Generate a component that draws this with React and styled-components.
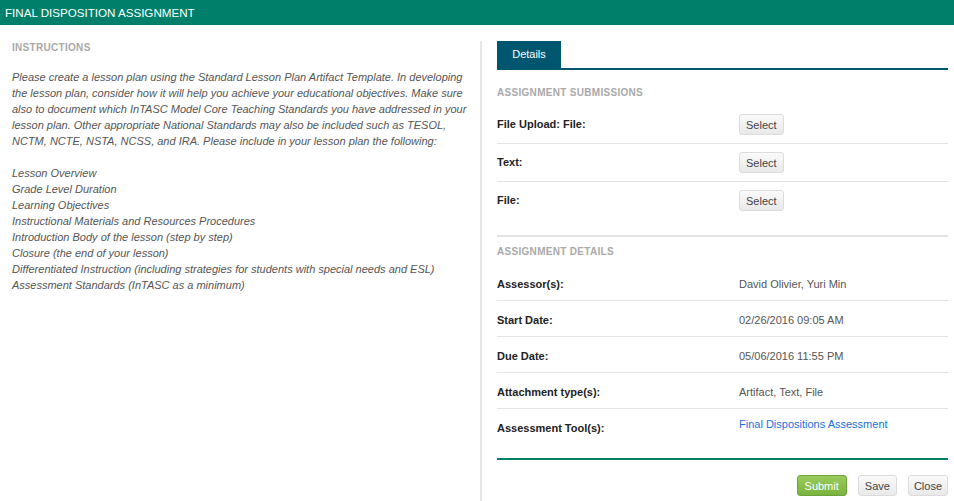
import styled, { createGlobalStyle } from "styled-components";

const GlobalStyle = createGlobalStyle`
  html, body {
    margin: 0;
    padding: 0;
    background: #fff;
    font-family: "Liberation Sans", Arial, sans-serif;
    font-size: 11px;
    color: #333;
  }
`;

const Page = styled.div`
  width: 954px;
  height: 501px;
  display: flex;
  flex-direction: column;
  overflow: hidden;
`;

const TitleBar = styled.div`
  height: 25px;
  background: #00806b;
  color: #fff;
  font-size: 11.6px;
  line-height: 25px;
  padding-left: 5px;
`;

const Main = styled.div`
  flex: 1;
  display: flex;
  padding-top: 16px;
`;

const Left = styled.div`
  width: 456px;
  padding: 0 12px;
`;

const Right = styled.div`
  flex: 1;
  border-left: 2px solid #e6e6e6;
  padding: 0 6px 0 15px;
  display: flex;
  flex-direction: column;
`;

const SectionTitle = styled.div`
  font-weight: bold;
  font-size: 10px;
  line-height: 13px;
  letter-spacing: 0.3px;
  color: #a9a9a9;
  margin: ${(p) => p.$margin || "0"};
`;

const Paragraph = styled.p`
  margin: 15px 0 0;
  font-style: italic;
  line-height: 16px;
  color: #555;
`;

const List = styled.div`
  margin-top: 16px;
  font-style: italic;
  line-height: 16px;
  color: #555;
`;

const Tabs = styled.div`
  display: flex;
  border-bottom: 2px solid #00566e;
`;

const Tab = styled.div`
  width: 64px;
  height: 27px;
  line-height: 27px;
  text-align: center;
  background: #00566e;
  color: #fff;
  font-size: 11px;
`;

const Rows = styled.div`
  margin-top: 7px;
`;

const Row = styled.div`
  display: grid;
  grid-template-columns: 242px 1fr;
  align-items: ${(p) => p.$align || "center"};
  min-height: ${(p) => p.$height || 37}px;
  border-bottom: ${(p) => (p.$last ? "none" : "1px solid #e3e3e3")};
`;

const Label = styled.div`
  font-weight: bold;
  color: #222;
  line-height: 13px;
  padding-top: ${(p) => p.$pt || 0}px;
`;

const Value = styled.div`
  color: #555;
  line-height: 13px;
  padding-top: ${(p) => p.$pt || 0}px;
`;

const Link = styled.a`
  color: #1a6fe0;
  text-decoration: none;
`;

const Button = styled.button`
  font-family: "Liberation Sans", Arial, sans-serif;
  font-size: 11px;
  color: #444;
  height: 21px;
  padding: 0 ${(p) => p.$px || 6}px;
  border: 1px solid #dcdcdc;
  border-radius: 3px;
  background: linear-gradient(#fafafa, #e9e9e9);
  cursor: pointer;
`;

const Submit = styled(Button)`
  color: #fff;
  border-color: #6ea23a;
  background: linear-gradient(#98cb5c, #7bb340);
`;

const Divider = styled.div`
  height: 2px;
  background: ${(p) => p.$color || "#e3e3e3"};
  margin-top: ${(p) => p.$mt || 0}px;
`;

const Footer = styled.div`
  display: flex;
  justify-content: flex-end;
  gap: 11px;
  margin-top: 15px;
`;

const lessonItems = [
  "Lesson Overview",
  "Grade Level Duration",
  "Learning Objectives",
  "Instructional Materials and Resources Procedures",
  "Introduction Body of the lesson (step by step)",
  "Closure (the end of your lesson)",
  "Differentiated Instruction (including strategies for students with special needs and ESL)",
  "Assessment Standards (InTASC as a minimum)",
];

const submissions = ["File Upload: File:", "Text:", "File:"];

const details = [
  ["Assessor(s):", "David Olivier, Yuri Min"],
  ["Start Date:", "02/26/2016 09:05 AM"],
  ["Due Date:", "05/06/2016 11:55 PM"],
  ["Attachment type(s):", "Artifact, Text, File"],
];

export default function App() {
  return (
    <Page>
      <GlobalStyle />
      <TitleBar>FINAL DISPOSITION ASSIGNMENT</TitleBar>
      <Main>
        <Left>
          <SectionTitle>INSTRUCTIONS</SectionTitle>
          <Paragraph>
            Please create a lesson plan using the Standard Lesson Plan Artifact
            Template. In developing the lesson plan, consider how it will help
            you achieve your educational objectives. Make sure also to document
            which InTASC Model Core Teaching Standards you have addressed in
            your lesson plan. Other appropriate National Standards may also be
            included such as TESOL, NCTM, NCTE, NSTA, NCSS, and IRA. Please
            include in your lesson plan the following:
          </Paragraph>
          <List>
            {lessonItems.map((item) => (
              <div key={item}>{item}</div>
            ))}
          </List>
        </Left>
        <Right>
          <Tabs>
            <Tab>Details</Tab>
          </Tabs>
          <SectionTitle $margin="16px 0 0">ASSIGNMENT SUBMISSIONS</SectionTitle>
          <Rows>
            {submissions.map((s, i) => (
              <Row key={s} $last={i === submissions.length - 1}>
                <Label>{s}</Label>
                <div>
                  <Button>Select</Button>
                </div>
              </Row>
            ))}
          </Rows>
          <Divider $mt={16} />
          <SectionTitle $margin="8px 0 0">ASSIGNMENT DETAILS</SectionTitle>
          <Rows>
            {details.map(([k, v]) => (
              <Row key={k} $height={35}>
                <Label $pt={3}>{k}</Label>
                <Value $pt={3}>{v}</Value>
              </Row>
            ))}
            <Row $height={36} $align="start" $last>
              <Label $pt={13}>Assessment Tool(s):</Label>
              <Value $pt={9}>
                <Link href="#">Final Dispositions Assessment</Link>
              </Value>
            </Row>
          </Rows>
          <Divider $mt={13} $color="#00806b" />
          <Footer>
            <Submit $px={7}>Submit</Submit>
            <Button $px={6}>Save</Button>
            <Button $px={5}>Close</Button>
          </Footer>
        </Right>
      </Main>
    </Page>
  );
}
